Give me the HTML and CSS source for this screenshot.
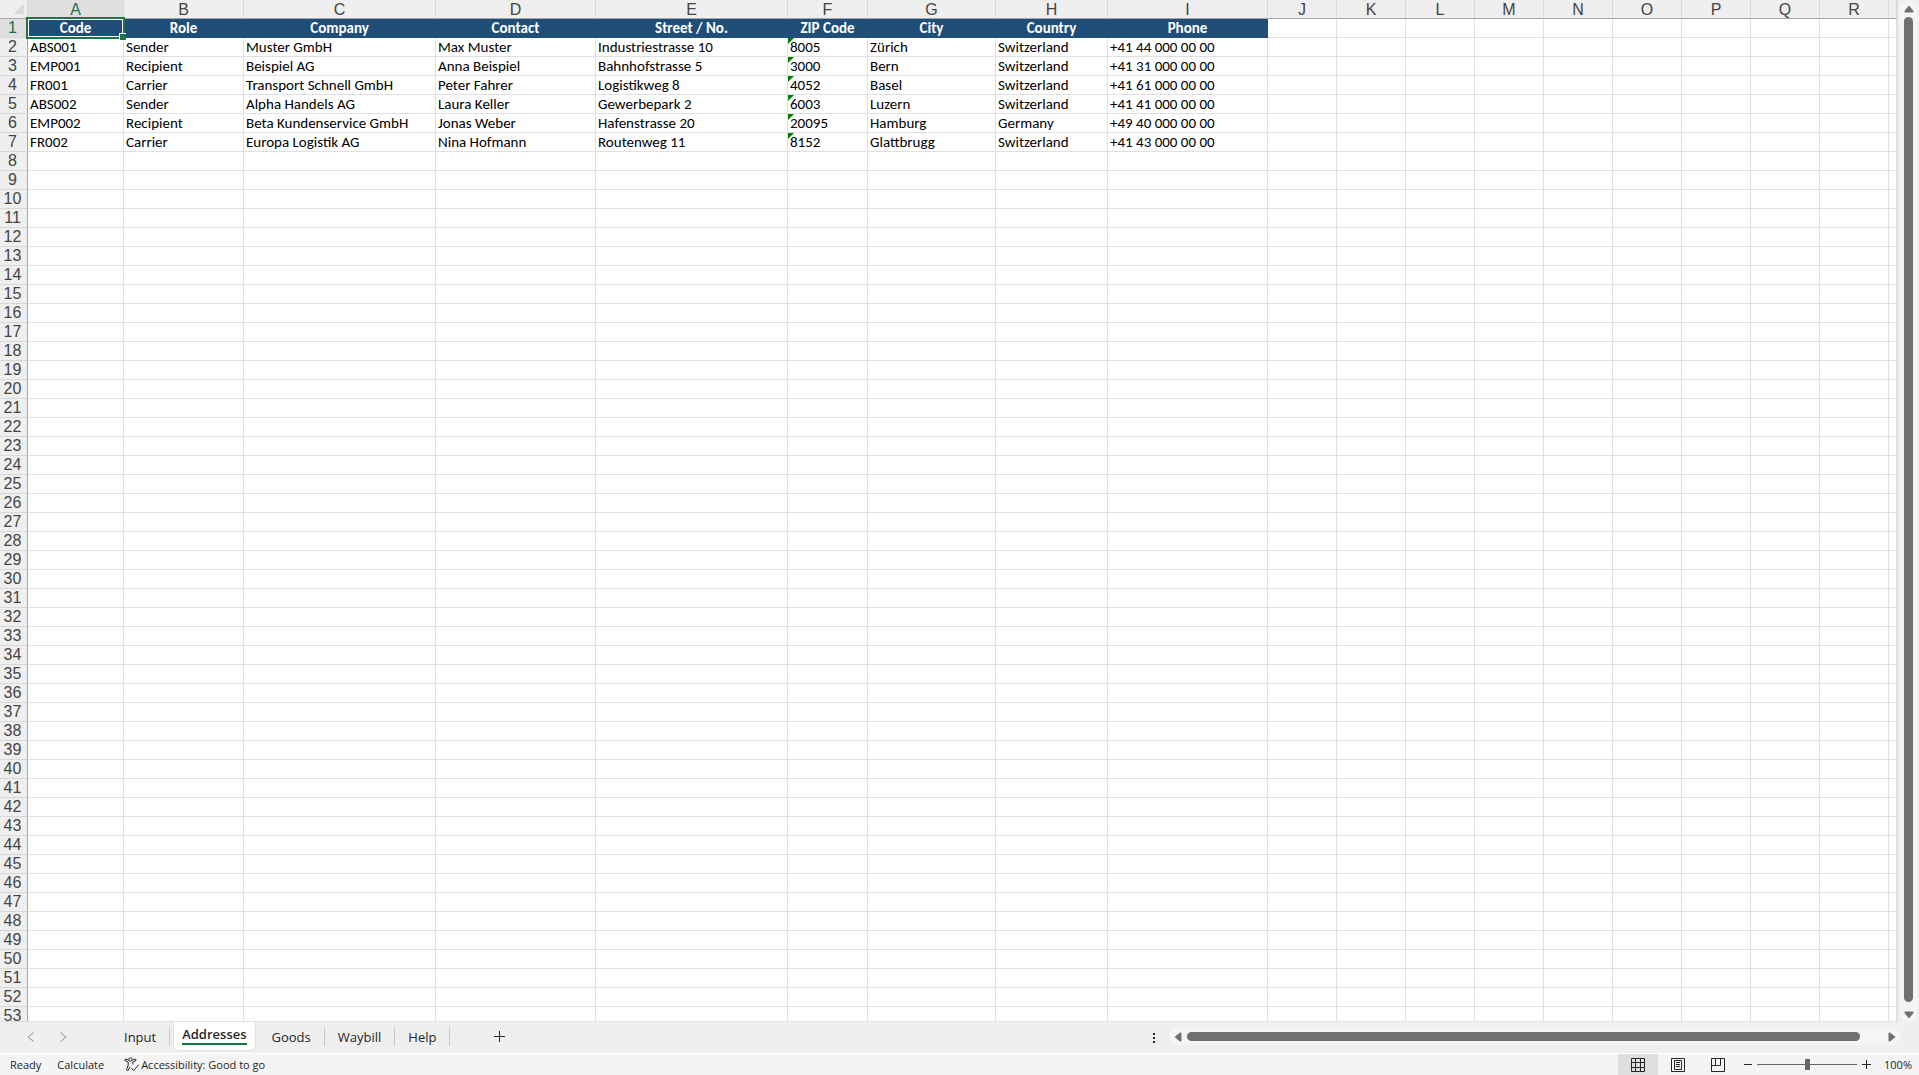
FILE: index.html
```html
<!DOCTYPE html>
<html lang="en">
<head>
    <meta charset="UTF-8">
    <meta name="viewport" content="width=device-width, initial-scale=1.0">
    <title>Addresses</title>
    <link rel="stylesheet" href="styles.css">
</head>
<body>

<main class="workspace">
    <div class="sheet">
        <table class="grid">
            <colgroup id="cols"></colgroup>
            <thead>
                <tr id="letters">
                    <th class="corner"><button type="button" class="select-all" aria-label="Select all"></button></th>
                </tr>
            </thead>
            <tbody id="rows"></tbody>
        </table>
    </div>
    <div class="scroll-v">
        <button type="button" class="arrow" aria-label="Scroll up"><svg width="10" height="8" viewBox="0 0 10 8"><path d="M5 0.5 9.5 6Q9.8 7.5 8.5 7.5H1.5Q0.2 7.5 0.5 6Z"/></svg></button>
        <div class="track"><div class="thumb"></div></div>
        <button type="button" class="arrow" aria-label="Scroll down"><svg width="10" height="8" viewBox="0 0 10 8"><path d="M5 7.5 9.5 2Q9.8 0.5 8.5 0.5H1.5Q0.2 0.5 0.5 2Z"/></svg></button>
    </div>
</main>

<nav class="tabbar">
    <div class="tab-nav">
        <button type="button" aria-label="Previous sheet"><svg width="8" height="10" viewBox="0 0 8 10"><path d="M6.5 0.5 1 5 6.5 9.5"/></svg></button>
        <button type="button" aria-label="Next sheet"><svg width="8" height="10" viewBox="0 0 8 10"><path d="M1.5 0.5 7 5 1.5 9.5"/></svg></button>
    </div>
    <div class="tabs">
        <button type="button" class="tab">Input</button>
        <button type="button" class="tab active"><span>Addresses</span></button>
        <button type="button" class="tab">Goods</button>
        <button type="button" class="tab">Waybill</button>
        <button type="button" class="tab">Help</button>
    </div>
    <button type="button" class="add-sheet" aria-label="New sheet"><svg width="11" height="11" viewBox="0 0 11 11"><path d="M5.5 0V11M0 5.5H11"/></svg></button>
    <div class="splitter"><i></i><i></i><i></i></div>
    <div class="scroll-h">
        <button type="button" class="arrow" aria-label="Scroll left"><svg width="8" height="10" viewBox="0 0 8 10"><path d="M0.5 5 6 0.5Q7.5 0.2 7.5 1.5V8.5Q7.5 9.8 6 9.5Z"/></svg></button>
        <div class="track"><div class="thumb"></div></div>
        <button type="button" class="arrow" aria-label="Scroll right"><svg width="8" height="10" viewBox="0 0 8 10"><path d="M7.5 5 2 0.5Q0.5 0.2 0.5 1.5V8.5Q0.5 9.8 2 9.5Z"/></svg></button>
    </div>
</nav>

<footer class="status">
    <span class="ready">Ready</span>
    <button type="button" class="calc">Calculate</button>
    <button type="button" class="access">
        <svg width="16" height="15" viewBox="0 0 16 15"><circle cx="6.5" cy="2.5" r="1.7"/><path d="M4.8 3.2 2 2.2Q0.6 2.1 1 3.5L4.2 5.2V8L2.6 12.4Q2.8 14.2 4.2 13.4L6 9.6M8.2 3.2 11 2.2Q12.4 2.1 12 3.5L8.8 5.2V7.5M7.5 11 9.5 13.5 14.8 7.8"/></svg>
        Accessibility: Good to go
    </button>
    <div class="views">
        <button type="button" class="view active" aria-label="Normal"><svg width="14" height="14" viewBox="0 0 14 14"><path d="M0.5 0.5H13.5V13.5H0.5ZM4.5 0.5V13.5M9.5 0.5V13.5M0.5 4.5H13.5M0.5 9.5H13.5"/></svg></button>
        <button type="button" class="view" aria-label="Page layout"><svg width="14" height="14" viewBox="0 0 14 14"><path d="M0.5 0.5H13.5V13.5H0.5ZM3.5 2.5H10.5V11.5H3.5ZM5 4.5H9M5 6.5H9M5 8.5H9"/></svg></button>
        <button type="button" class="view" aria-label="Page break preview"><svg width="14" height="14" viewBox="0 0 14 14"><path d="M0.5 0.5H13.5V13.5H0.5ZM0.5 7.5H9.5V0.5M4.5 0.5V7.5"/></svg></button>
    </div>
    <div class="zoom">
        <button type="button" aria-label="Zoom out"><svg width="8" height="8" viewBox="0 0 8 8"><path d="M0 3.5H8"/></svg></button>
        <input type="range" min="0" max="100" value="50" aria-label="Zoom">
        <button type="button" aria-label="Zoom in"><svg width="9" height="9" viewBox="0 0 9 9"><path d="M4.5 0V9M0 4.5H9"/></svg></button>
        <button type="button" class="percent">100%</button>
    </div>
</footer>

<script>
    const ROW_COUNT = 53;
    const letters = 'ABCDEFGHIJKLMNOPQR'.split('');
    const sizes = ['w96', 'w120', 'w192', 'w160', 'w192', 'w80', 'w128', 'w112', 'w160'];
    const data = [
        ['Code', 'Role', 'Company', 'Contact', 'Street / No.', 'ZIP Code', 'City', 'Country', 'Phone'],
        ['ABS001', 'Sender', 'Muster GmbH', 'Max Muster', 'Industriestrasse 10', '8005', 'Zürich', 'Switzerland', '+41 44 000 00 00'],
        ['EMP001', 'Recipient', 'Beispiel AG', 'Anna Beispiel', 'Bahnhofstrasse 5', '3000', 'Bern', 'Switzerland', '+41 31 000 00 00'],
        ['FR001', 'Carrier', 'Transport Schnell GmbH', 'Peter Fahrer', 'Logistikweg 8', '4052', 'Basel', 'Switzerland', '+41 61 000 00 00'],
        ['ABS002', 'Sender', 'Alpha Handels AG', 'Laura Keller', 'Gewerbepark 2', '6003', 'Luzern', 'Switzerland', '+41 41 000 00 00'],
        ['EMP002', 'Recipient', 'Beta Kundenservice GmbH', 'Jonas Weber', 'Hafenstrasse 20', '20095', 'Hamburg', 'Germany', '+49 40 000 00 00'],
        ['FR002', 'Carrier', 'Europa Logistik AG', 'Nina Hofmann', 'Routenweg 11', '8152', 'Glattbrugg', 'Switzerland', '+41 43 000 00 00']
    ];

    function addCell(tr, tag, text, className) {
        const cell = document.createElement(tag);
        cell.textContent = text;
        if (className) cell.className = className;
        tr.appendChild(cell);
    }

    const cols = document.getElementById('cols');
    const colClasses = ['w28', ...letters.map((l, i) => sizes[i] || 'w69'), 'rest'];
    colClasses.forEach(name => {
        const col = document.createElement('col');
        col.className = name;
        cols.appendChild(col);
    });

    const head = document.getElementById('letters');
    letters.forEach((l, i) => addCell(head, 'th', l, i === 0 ? 'col-head current' : 'col-head'));
    addCell(head, 'th', '', 'col-head');

    const body = document.getElementById('rows');
    for (let r = 0; r < ROW_COUNT; r++) {
        const tr = document.createElement('tr');
        addCell(tr, 'th', r + 1, r === 0 ? 'row-head current' : 'row-head');
        for (let c = 0; c <= letters.length; c++) {
            const text = data[r] && data[r][c] || '';
            let className = '';
            if (r === 0 && text) className = 'title';
            if (r === 0 && c === 0) className += ' selected';
            // numbers stored as text get the green corner
            if (r > 0 && c === 5 && text) className = 'warn';
            addCell(tr, 'td', text, className);
        }
        body.appendChild(tr);
    }
</script>
</body>
</html>
```
FILE: styles.css
```css
* {
    box-sizing: border-box;
}
body {
    margin: 0;
    height: 100vh;
    display: flex;
    flex-direction: column;
    overflow: hidden;
    background: #efefef;
    color: #262626;
    font-family: "Open Sans", sans-serif;
    font-size: 11px;
}
button {
    display: flex;
    align-items: center;
    justify-content: center;
    padding: 0;
    border: none;
    background: none;
    color: inherit;
    font: inherit;
}
svg {
    display: block;
    fill: none;
    stroke: #262626;
}

/* grid */
.workspace {
    flex: 1;
    min-height: 0;
    display: flex;
    gap: 2px;
    padding-right: 2px;
}
.sheet {
    flex: 1;
    min-width: 0;
    overflow: hidden;
    background: #fff;
    border-right: 1px solid #e0e0e0;
    border-bottom: 1px solid #e0e0e0;
}
.grid {
    width: 100%;
    table-layout: fixed;
    border-collapse: separate;
    border-spacing: 0;
}
.w28 { width: 28px; }
.w69 { width: 69px; }
.w80 { width: 80px; }
.w96 { width: 96px; }
.w112 { width: 112px; }
.w120 { width: 120px; }
.w128 { width: 128px; }
.w160 { width: 160px; }
.w192 { width: 192px; }
.grid th,
.grid td {
    height: 19px;
    padding: 0;
    white-space: nowrap;
}
.grid th {
    background: #efefef;
    color: #444;
    font-family: "Liberation Sans", Arial, sans-serif;
    font-size: 16px;
    font-weight: normal;
    line-height: 18px;
}
.grid .corner,
.grid .col-head {
    border-bottom: 1px solid #a6a6a6;
    border-right: 1px solid #d8d8d8;
}
.grid .col-head {
    padding-top: 2px;
    line-height: 16px;
}
.select-all {
    width: 10px;
    height: 10px;
    margin-left: 14px;
    background: linear-gradient(135deg, transparent 50%, #dcdcdc 50%);
}
.grid .row-head {
    padding-right: 2px;
    border-right: 1px solid #a6a6a6;
    border-bottom: 1px solid #d8d8d8;
}
.grid .current {
    background: #dfdfdf;
    color: #217346;
}
.grid td {
    padding-left: 2px;
    border-right: 1px solid #e0e0e0;
    border-bottom: 1px solid #e0e0e0;
    color: #000;
    font-family: Carlito, Lato, sans-serif;
    font-size: 15px;
    line-height: 18px;
}
.grid .title {
    padding: 0;
    background: #1f4e78;
    border-color: #1f4e78;
    color: #fff;
    font-weight: bold;
    text-align: center;
}
.selected,
.warn {
    position: relative;
}
.selected::before {
    content: "";
    position: absolute;
    inset: -2px -2px -2px -2px;
    border: 2px solid #217346;
    box-shadow: inset 0 0 0 1px #fff;
}
.selected::after {
    content: "";
    position: absolute;
    right: -3px;
    bottom: -3px;
    width: 6px;
    height: 6px;
    background: #217346;
    border-top: 1px solid #fff;
    border-left: 1px solid #fff;
}
.warn::before {
    content: "";
    position: absolute;
    top: 0;
    left: 0;
    border-top: 6px solid #008000;
    border-right: 6px solid transparent;
}

/* scrollbars */
.scroll-v,
.scroll-h {
    display: flex;
    background: #f5f5f5;
    border-radius: 9px;
}
.scroll-v {
    flex-direction: column;
    align-items: center;
    width: 17px;
    padding: 5px 0 3px;
    gap: 4px;
}
.scroll-h {
    align-items: center;
    width: 730px;
    height: 17px;
    padding: 0 4px;
    gap: 5px;
}
.track {
    flex: 1;
}
.thumb {
    background: #707070;
    border-radius: 5px;
}
.scroll-v .track {
    padding-bottom: 5px;
}
.scroll-v .thumb {
    width: 9px;
    height: 100%;
}
.scroll-h .track {
    padding-right: 23px;
}
.scroll-h .thumb {
    height: 9px;
}
.arrow svg {
    fill: #707070;
    stroke: none;
}

/* sheet tabs */
.tabbar {
    display: flex;
    align-items: center;
    height: 31px;
    padding: 0 19px 2px 0;
    font-size: 13px;
}
.tab-nav {
    display: flex;
    gap: 24px;
    width: 111px;
    padding-left: 27px;
}
.tab-nav svg {
    stroke: #8c8c8c;
}
.tabs {
    display: flex;
    align-self: stretch;
    align-items: center;
}
.tab {
    height: 19px;
    padding: 0 13px;
    border-right: 1px solid #c8c8c8;
}
.tab.active {
    align-self: flex-start;
    height: 29px;
    margin: 0 3px;
    padding: 0 8px 3px;
    background: #fff;
    border: 1px solid #e0e0e0;
    border-top: none;
    border-radius: 0 0 5px 5px;
    font-weight: 600;
}
.tab.active span {
    border-bottom: 2px solid #107c41;
}
.add-sheet {
    width: 98px;
}
.splitter {
    display: flex;
    flex-direction: column;
    gap: 2px;
    margin: 2px 15px 0 auto;
}
.splitter i {
    width: 2px;
    height: 2px;
    background: #262626;
}

/* status bar */
.status {
    display: flex;
    align-items: center;
    height: 22px;
    padding-left: 10px;
    background: #f4f4f4;
    border-top: 1px solid #fff;
}
.calc {
    margin: 0 20px 0 16px;
}
.access {
    gap: 1px;
}
.views {
    display: flex;
    align-self: stretch;
    margin-left: auto;
}
.view {
    width: 40px;
}
.view.active {
    background: #dedede;
}
.zoom {
    display: flex;
    align-items: center;
    gap: 5px;
    padding: 0 7px 0 6px;
}
.zoom input {
    appearance: none;
    width: 100px;
    height: 11px;
    margin: 0;
    background: linear-gradient(#666, #666) center / 100% 1px no-repeat;
}
.zoom input::-webkit-slider-thumb {
    appearance: none;
    width: 5px;
    height: 11px;
    background: #666;
}
.percent {
    margin-left: 8px;
}
```
